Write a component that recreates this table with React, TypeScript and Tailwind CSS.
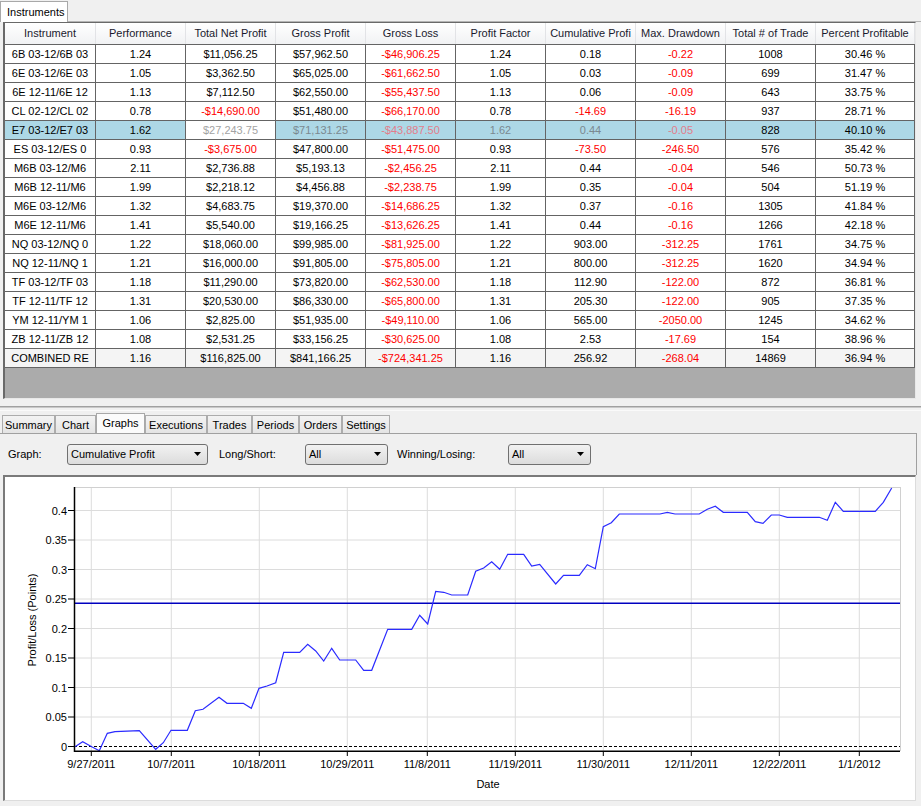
import React from "react";

const columns = [
  { title: "Instrument", w: "w-[91px]" },
  { title: "Performance", w: "w-[90px]" },
  { title: "Total Net Profit", w: "w-[90px]" },
  { title: "Gross Profit", w: "w-[90px]" },
  { title: "Gross Loss", w: "w-[90px]" },
  { title: "Profit Factor", w: "w-[90px]" },
  { title: "Cumulative Profi", w: "w-[90px]" },
  { title: "Max. Drawdown", w: "w-[90px]" },
  { title: "Total # of Trade", w: "w-[90px]" },
  { title: "Percent Profitable", w: "w-[99px]" },
];

const rows = [
  ["6B 03-12/6B 03", "1.24", "$11,056.25", "$57,962.50", "-$46,906.25", "1.24", "0.18", "-0.22", "1008", "30.46 %"],
  ["6E 03-12/6E 03", "1.05", "$3,362.50", "$65,025.00", "-$61,662.50", "1.05", "0.03", "-0.09", "699", "31.47 %"],
  ["6E 12-11/6E 12", "1.13", "$7,112.50", "$62,550.00", "-$55,437.50", "1.13", "0.06", "-0.09", "643", "33.75 %"],
  ["CL 02-12/CL 02", "0.78", "-$14,690.00", "$51,480.00", "-$66,170.00", "0.78", "-14.69", "-16.19", "937", "28.71 %"],
  ["E7 03-12/E7 03", "1.62", "$27,243.75", "$71,131.25", "-$43,887.50", "1.62", "0.44", "-0.05", "828", "40.10 %"],
  ["ES 03-12/ES 0", "0.93", "-$3,675.00", "$47,800.00", "-$51,475.00", "0.93", "-73.50", "-246.50", "576", "35.42 %"],
  ["M6B 03-12/M6", "2.11", "$2,736.88", "$5,193.13", "-$2,456.25", "2.11", "0.44", "-0.04", "546", "50.73 %"],
  ["M6B 12-11/M6", "1.99", "$2,218.12", "$4,456.88", "-$2,238.75", "1.99", "0.35", "-0.04", "504", "51.19 %"],
  ["M6E 03-12/M6", "1.32", "$4,683.75", "$19,370.00", "-$14,686.25", "1.32", "0.37", "-0.16", "1305", "41.84 %"],
  ["M6E 12-11/M6", "1.41", "$5,540.00", "$19,166.25", "-$13,626.25", "1.41", "0.44", "-0.16", "1266", "42.18 %"],
  ["NQ 03-12/NQ 0", "1.22", "$18,060.00", "$99,985.00", "-$81,925.00", "1.22", "903.00", "-312.25", "1761", "34.75 %"],
  ["NQ 12-11/NQ 1", "1.21", "$16,000.00", "$91,805.00", "-$75,805.00", "1.21", "800.00", "-312.25", "1620", "34.94 %"],
  ["TF 03-12/TF 03", "1.18", "$11,290.00", "$73,820.00", "-$62,530.00", "1.18", "112.90", "-122.00", "872", "36.81 %"],
  ["TF 12-11/TF 12", "1.31", "$20,530.00", "$86,330.00", "-$65,800.00", "1.31", "205.30", "-122.00", "905", "37.35 %"],
  ["YM 12-11/YM 1", "1.06", "$2,825.00", "$51,935.00", "-$49,110.00", "1.06", "565.00", "-2050.00", "1245", "34.62 %"],
  ["ZB 12-11/ZB 12", "1.08", "$2,531.25", "$33,156.25", "-$30,625.00", "1.08", "2.53", "-17.69", "154", "38.96 %"],
  ["COMBINED RE", "1.16", "$116,825.00", "$841,166.25", "-$724,341.25", "1.16", "256.92", "-268.04", "14869", "36.94 %"],
];

// the selected row (E7) has odd, washed-out cell colours
const selectedCells = [
  "bg-[#add8e6] text-black",
  "bg-[#add8e6] text-black",
  "bg-white text-[#a3a3a3]",
  "bg-[#add8e6] text-[#7b8990]",
  "bg-[#add8e6] text-[#e27d8b]",
  "bg-[#add8e6] text-[#7b8990]",
  "bg-[#add8e6] text-[#7b8990]",
  "bg-[#add8e6] text-[#e27d8b]",
  "bg-[#add8e6] text-black",
  "bg-[#add8e6] text-black",
];

const bottomTabs = [
  { name: "Summary", w: "w-[53px]" },
  { name: "Chart", w: "w-[41px]" },
  { name: "Graphs", w: "w-[49px]" },
  { name: "Executions", w: "w-[62px]" },
  { name: "Trades", w: "w-[45px]" },
  { name: "Periods", w: "w-[47px]" },
  { name: "Orders", w: "w-[43px]" },
  { name: "Settings", w: "w-[48px]" },
];

const points: [number, number][] = [
  [75, 746.7], [82.7, 741.7], [91.7, 746.7], [99.3, 750.7], [107.3, 733.3], [115, 731.7],
  [139.3, 730.7], [155.7, 749.3], [163.3, 742.7], [171, 730.3], [187.3, 730.3], [195.3, 710.7],
  [203, 709.3], [219, 697.3], [227, 703.3], [243.3, 703.3], [251.3, 708.3], [259, 688.3],
  [267, 686], [275.7, 682.7], [283.7, 652.3], [299.7, 652.3], [307.7, 644.3], [315.7, 651],
  [323.7, 661], [331.7, 648.3], [339.7, 660], [355.7, 660], [363.7, 670.3], [371.7, 670.3],
  [387.7, 629.3], [411.7, 629.3], [419.7, 615.3], [427.7, 624], [435.7, 591.3], [443.7, 592.3],
  [451.7, 595], [467.7, 595], [475.7, 571.3], [483.7, 568], [491.7, 561.7], [499.7, 569.3],
  [507.7, 554.3], [523.7, 554.3], [531.7, 566], [539.7, 564.3], [555.7, 584], [563.5, 575.3],
  [579.3, 575.3], [587.3, 564.7], [595.3, 568.7], [603.3, 526.7], [611.3, 522.7], [619.3, 514],
  [660, 514], [667.3, 512.3], [675, 514], [699.3, 514], [707.3, 509.3], [715.3, 506.3],
  [723.3, 512.3], [747.3, 512.3], [755.3, 521.7], [763, 523.3], [771.3, 515], [779.3, 515],
  [787.3, 517.3], [819.3, 517.3], [827.3, 520.3], [835.3, 502.3], [843.3, 511.3], [875.3, 511.3],
  [883.3, 502.3], [891.7, 488],
];

const yTicks = ["0", "0.05", "0.1", "0.15", "0.2", "0.25", "0.3", "0.35", "0.4"];
const xTicks: [number, string][] = [
  [91.3, "9/27/2011"], [171.3, "10/7/2011"], [259.3, "10/18/2011"], [347.3, "10/29/2011"],
  [427.3, "11/8/2011"], [515.3, "11/19/2011"], [603.3, "11/30/2011"], [691.3, "12/11/2011"],
  [779.3, "12/22/2011"], [859.3, "1/1/2012"],
];

const yOf = (v: number) => 746.5 - v * 590;

const Combo = ({ text, w }: { text: string; w: string }) => (
  <div
    className={`${w} h-[21px] rounded-[3px] border border-[#707070] bg-gradient-to-b from-[#f2f2f2] to-[#dcdcdc] flex items-center pl-[3px] pr-[6px]`}
  >
    <span className="flex-1">{text}</span>
    <svg width="7" height="4" viewBox="0 0 7 4">
      <path d="M0 0h7L3.5 4z" fill="#000" />
    </svg>
  </div>
);

const Chart = () => (
  <svg width="910" height="323" className="block" fontFamily="'Liberation Sans', Arial, sans-serif" fontSize="11">
    <g transform="translate(-5,-477)">
      {/* grid */}
      {yTicks.slice(1).map((t) => (
        <line key={t} x1={74} x2={900} y1={yOf(parseFloat(t))} y2={yOf(parseFloat(t))} stroke="#dcdcdc" />
      ))}
      {xTicks.map(([x]) => (
        <line key={x} x1={x} x2={x} y1={487} y2={751} stroke="#dcdcdc" />
      ))}
      <line x1={74} x2={900} y1={487.5} y2={487.5} stroke="#d0d0d0" />
      <line x1={900.5} x2={900.5} y1={487} y2={751} stroke="#d0d0d0" />

      {/* zero line and average */}
      <line x1={74} x2={900} y1={746.5} y2={746.5} stroke="#000" strokeDasharray="3 2" />
      <line x1={74} x2={900} y1={603.3} y2={603.3} stroke="#0000c0" strokeWidth={1.4} />

      <polyline
        points={points.map((p) => p.join(",")).join(" ")}
        fill="none"
        stroke="#2b2bff"
        strokeWidth={1.2}
      />

      {/* axes */}
      <line x1={74.5} x2={74.5} y1={487} y2={752} stroke="#000" strokeWidth={1.5} />
      <line x1={74} x2={900} y1={751.3} y2={751.3} stroke="#000" strokeWidth={1.5} />
      {yTicks.map((t) => (
        <g key={t}>
          <line x1={68} x2={74} y1={yOf(parseFloat(t))} y2={yOf(parseFloat(t))} stroke="#000" />
          <text x={67} y={yOf(parseFloat(t)) + 4} textAnchor="end" fill="#000">
            {t}
          </text>
        </g>
      ))}
      {xTicks.map(([x, label]) => (
        <g key={label}>
          <line x1={x} x2={x} y1={751} y2={756} stroke="#000" />
          <text x={x} y={768} textAnchor="middle" fill="#000">
            {label}
          </text>
        </g>
      ))}
      <text x={488} y={788} textAnchor="middle" fill="#000">
        Date
      </text>
      <text x={36} y={620} textAnchor="middle" fill="#000" transform="rotate(-90 36 620)">
        Profit/Loss (Points)
      </text>
    </g>
  </svg>
);

export default function App() {
  return (
    <div className="w-[921px] h-[806px] overflow-hidden bg-[#f0f0f0] text-[11px] leading-none text-black font-['Liberation_Sans',Arial,sans-serif]">
      {/* Instruments tab */}
      <div className="h-[22px] flex items-end border-b border-[#b4b4b4]">
        <div className="relative -mb-px h-[21px] w-[68px] bg-white border border-b-0 border-[#a8a8a8] flex items-center pl-[6px]">
          Instruments
        </div>
      </div>

      {/* instruments grid */}
      <div className="ml-[3px] w-[913px] h-[377px] border-l-2 border-t border-[#696969] border-r border-b border-r-[#e8e8e8] border-b-[#e8e8e8] bg-[#ababab] flex flex-col">
        <div className="flex h-[22px] border-b border-[#646464] bg-gradient-to-b from-white to-[#f1f2f4]">
          {columns.map((c) => (
            <div
              key={c.title}
              className={`${c.w} shrink-0 border-r border-[#e2e3e6] flex items-center justify-center whitespace-nowrap overflow-hidden text-[#1a1a2e]`}
            >
              {c.title}
            </div>
          ))}
        </div>
        {rows.map((r, ri) => (
          <div key={r[0]} className={`flex h-[19px] ${ri === 16 ? "bg-[#f4f4f4]" : "bg-white"}`}>
            {r.map((v, ci) => {
              const color =
                ri === 4 ? selectedCells[ci] : v.startsWith("-") ? "text-[#ff0000]" : "text-black";
              return (
                <div
                  key={ci}
                  className={`${columns[ci].w} shrink-0 border-r border-b border-[#646464] flex items-center justify-center whitespace-nowrap overflow-hidden ${color}`}
                >
                  {v}
                </div>
              );
            })}
          </div>
        ))}
      </div>

      {/* splitter */}
      <div className="h-[12px] flex flex-col">
        <div className="h-[7px]" />
        <div className="h-px bg-[#a0a0a0]" />
        <div className="h-px bg-[#c8c8c8]" />
        <div className="h-[2px]" />
        <div className="h-px bg-[#fafafa]" />
      </div>

      {/* bottom tabs */}
      <div className="h-[22px] flex items-end pl-[2px]">
        {bottomTabs.map((t) =>
          t.name === "Graphs" ? (
            <div
              key={t.name}
              className={`${t.w} h-[20px] bg-[#fbfbfb] border border-b-0 border-[#a8a8a8] flex items-center justify-center`}
            >
              {t.name}
            </div>
          ) : (
            <div
              key={t.name}
              className={`${t.w} h-[18px] bg-gradient-to-b from-[#f3f3f3] to-[#e4e4e4] border border-b-0 border-[#acacac] flex items-center justify-center pt-[2px]`}
            >
              {t.name}
            </div>
          )
        )}
      </div>

      {/* toolbar */}
      <div className="h-[42px] w-[917px] border-t border-r border-[#a0a0a0] flex items-center pb-[1px]">
        <span className="ml-[8px] w-[59px]">Graph:</span>
        <Combo text="Cumulative Profit" w="w-[141px]" />
        <span className="ml-[11px] w-[86px]">Long/Short:</span>
        <Combo text="All" w="w-[83px]" />
        <span className="ml-[9px] w-[111px]">Winning/Losing:</span>
        <Combo text="All" w="w-[83px]" />
      </div>

      {/* chart */}
      <div className="ml-[3px] w-[913px] h-[326px] bg-white border-t-2 border-l-2 border-[#7a7a7a] border-r border-b border-r-[#dcdcdc] border-b-[#dcdcdc]">
        <Chart />
      </div>
    </div>
  );
}
